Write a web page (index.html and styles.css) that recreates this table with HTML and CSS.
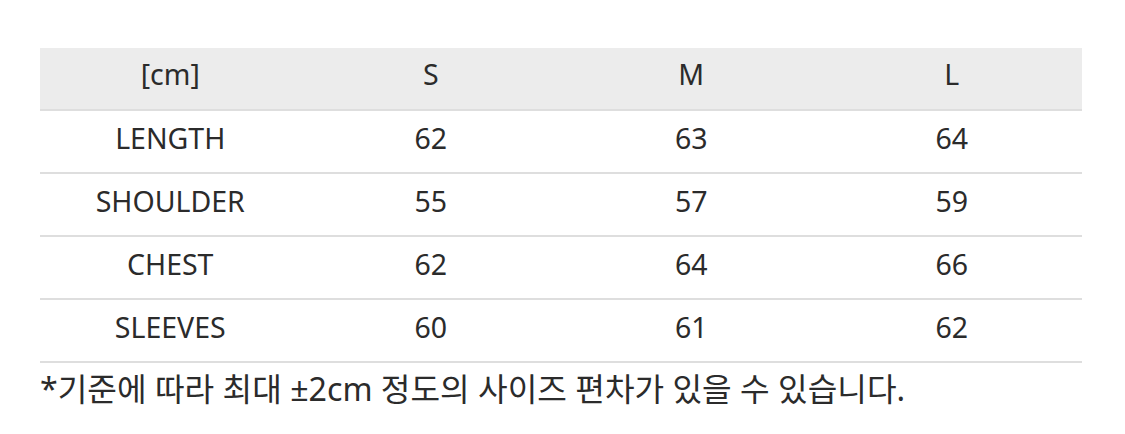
FILE: index.html
```html
<!DOCTYPE html>
<html lang="ko">
<head>
<meta charset="utf-8">
<link rel="stylesheet" href="styles.css">
</head>
<body>
<div class="wrap">
  <table class="size">
    <thead>
      <tr><th>[cm]</th><th>S</th><th>M</th><th>L</th></tr>
    </thead>
    <tbody>
      <tr><td>LENGTH</td><td>62</td><td>63</td><td>64</td></tr>
      <tr><td>SHOULDER</td><td>55</td><td>57</td><td>59</td></tr>
      <tr><td>CHEST</td><td>62</td><td>64</td><td>66</td></tr>
      <tr><td>SLEEVES</td><td>60</td><td>61</td><td>62</td></tr>
    </tbody>
  </table>
  <p class="note">*기준에 따라 최대 ±2cm 정도의 사이즈 편차가 있을 수 있습니다.</p>
</div>
</body>
</html>
```
FILE: styles.css
```css
html, body {
  margin: 0;
  padding: 0;
  background: #fff;
}
body {
  font-family: "Noto Sans", "Noto Sans CJK KR", sans-serif;
  color: #2b2b2b;
}
.wrap {
  padding: 48px 43px 0 40px;
}
.size {
  width: 100%;
  border-collapse: collapse;
  table-layout: fixed;
}
.size th, .size td {
  height: 53px;
  padding: 0 0 8px 0;
  text-align: center;
  vertical-align: middle;
  font-size: 28.5px;
  line-height: 36px;
  font-weight: 400;
  border-bottom: 2px solid #dedede;
}
.size thead th {
  background: #ececec;
  padding-bottom: 10px;
  height: 51px;
}
.note {
  margin: 6px 0 0 0;
  font-size: 32.2px;
  line-height: 40px;
  font-family: "Noto Sans", "Noto Sans CJK KR", sans-serif;
}
```
